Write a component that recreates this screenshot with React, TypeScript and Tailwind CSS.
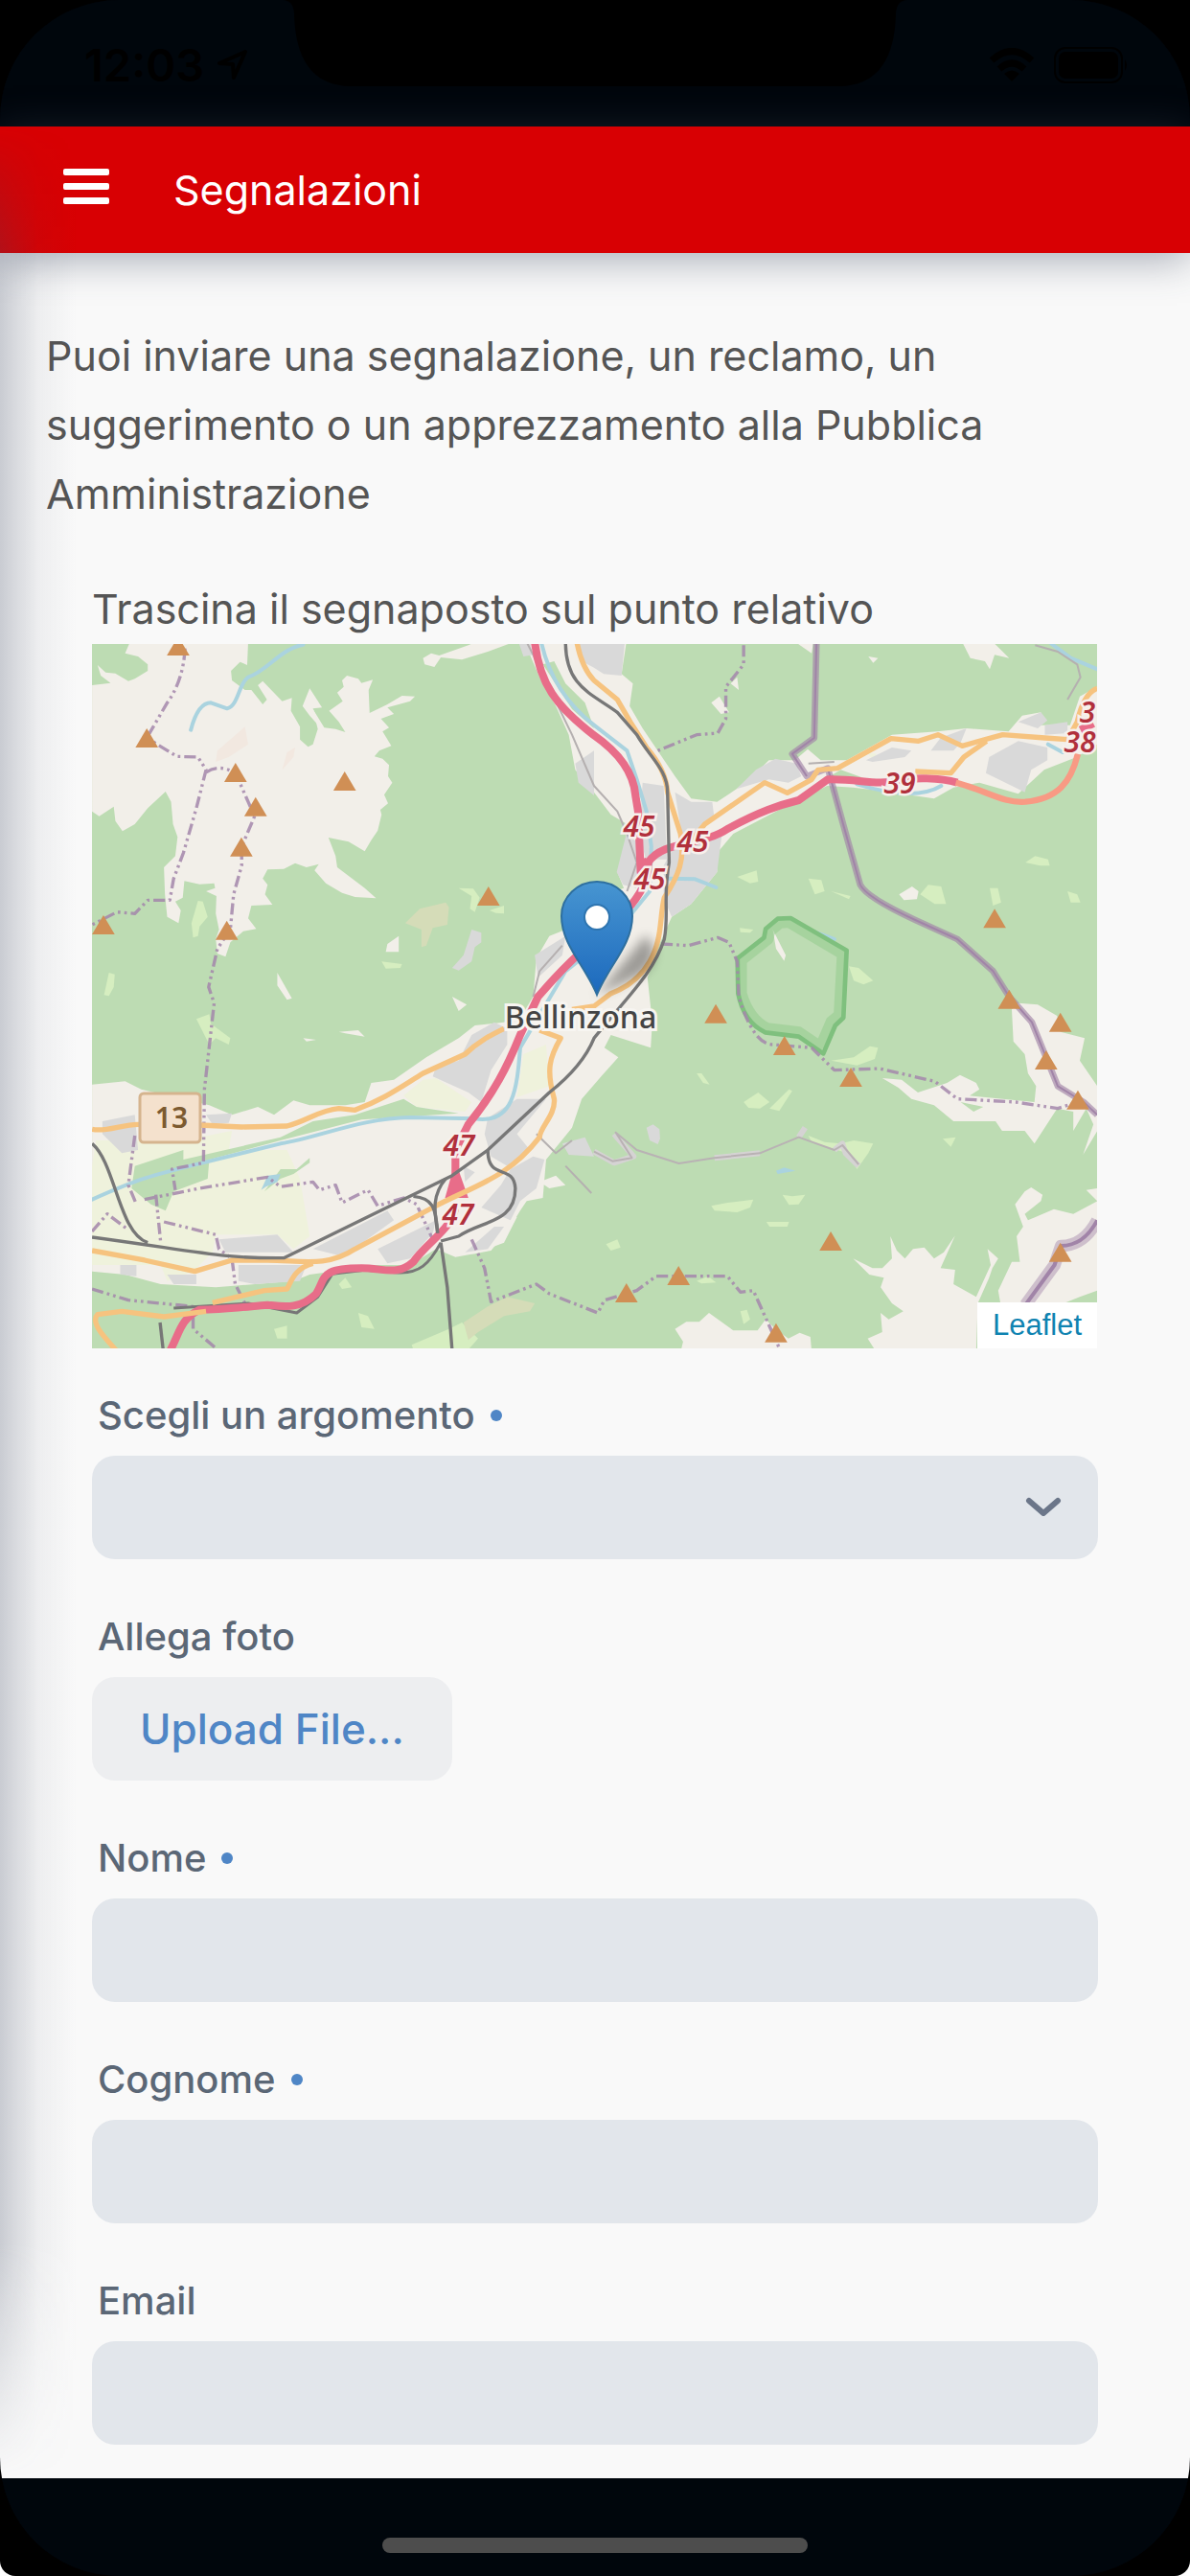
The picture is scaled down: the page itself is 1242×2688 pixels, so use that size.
import { ReactNode } from 'react'

const grass = '#bddcb3'
const rock = '#f2efe9'
const built = '#d9d9d9'
const farm = '#eff2dc'
const meadow = '#d6eec0'
const water = '#aad3df'

// base-line centre of every summit symbol
const peaks = [
  [284, 42], [187, 330], [461, 438], [523, 545], [798, 465], [479, 671],
  [53, 915], [434, 932], [1242, 825], [2805, 895], [1944, 1193], [2156, 1293],
  [2361, 1392], [2850, 1148], [3008, 1220], [2964, 1338], [3062, 1463],
  [2299, 1905], [1829, 2013], [1668, 2067], [2130, 2192], [3008, 1940],
]

const meadows = [
  '330,925 325,880 345,810 360,812 375,860 350,890 345,920',
  '55,1105 70,1035 88,1040 85,1080 70,1108',
  '1150,770 1195,772 1215,800 1200,845 1185,835 1190,795',
  '1245,840 1290,825 1290,850 1265,848',
  '912,1000 975,1008 970,1020 925,1022',
  '340,1180 380,1165 385,1195 445,1240 440,1260 400,1240 380,1260',
  '2010,735 2070,715 2075,750 2050,755',
  '2230,740 2270,745 2280,780 2250,790',
  '2300,780 2360,795 2355,805',
  '2575,790 2600,760 2640,765 2655,820 2620,820',
  '2355,1015 2385,1020 2430,1060 2400,1072 2370,1060',
  '2900,690 2930,670 2970,680 2975,700 2945,700',
  '2790,770 2815,770 2825,815 2800,825',
  '3030,780 3060,790 3070,815 3040,815',
  '2018,895 2060,900 2050,910 2020,908',
  '2300,1310 2370,1300 2420,1265 2445,1270 2435,1305 2380,1325',
  '2030,1440 2075,1410 2110,1440 2080,1460 2045,1458',
  '2110,1460 2170,1400 2180,1405 2140,1468',
  '1885,1350 1900,1350 1925,1385 1905,1380',
  '2230,1545 2280,1565 2330,1570 2370,1560 2430,1570 2415,1600 2380,1650 2350,1600 2240,1565',
  '1930,1765 1980,1755 2060,1745 2050,1770 2010,1785 1940,1780',
  '2150,1730 2180,1735 2220,1730 2200,1760 2170,1762',
  '2100,1815 2170,1815 2165,1830 2110,1830',
  '1605,1885 1640,1870 1650,1895 1620,1905',
  '2645,1555 2685,1550 2670,1580',
  '1885,2000 1920,1985 1945,2005 1900,2008',
  '2020,2095 2040,2090 2050,2120 2030,2135',
  '1005,2200 1120,2150 1160,2130 1210,2180 1180,2215 1010,2215',
  '840,2100 870,2110 890,2150 850,2145',
  '780,2010 800,1990 820,2020 790,2025',
  '580,2150 620,2140 620,2180 590,2180',
]

const motorways = [
  'M1385 0C1400 130 1450 200 1568 292C1650 350 1690 410 1696 480L1704 530L1712 720L1735 680',
  'M1735 690Q1740 760 1668 840L1540 960C1480 1010 1430 1070 1395 1110L1340 1230C1300 1330 1260 1410 1180 1510L1140 1590V1660L1142 1740',
  'M1735 690C1780 620 1900 640 1980 585C2080 530 2140 510 2200 495L2290 430C2380 428 2420 445 2480 438C2560 420 2640 425 2690 440',
  'M1140 1760C1140 1830 1050 1880 1010 1940C960 1985 920 1960 850 1960C720 1960 740 1990 710 2040C660 2090 610 2080 560 2075C500 2080 420 2090 350 2090C290 2120 290 2160 258 2220',
  'M3070 275L3110 255',
]

const orangeRoads = [
  'M1515 0Q1530 80 1568 120L1640 180L1680 250L1730 330Q1790 400 1795 470L1835 600C1850 680 1830 730 1785 800C1770 860 1780 930 1740 1000Q1700 1070 1620 1100L1568 1140L1500 1150',
  'M1840 655L1910 570L2095 440L2165 472L2240 430L2260 400L2320 395L2485 302L2570 310L2630 290L2705 325L2830 290L2960 300L3030 305L3060 250Q3080 160 3122 145',
  'M2560 405L2670 410L2710 360L2780 310',
  'M18 1525C60 1535 110 1510 160 1510L350 1512L480 1518L620 1515C680 1500 720 1465 780 1460L830 1465C920 1430 960 1400 1040 1350L1170 1290C1210 1250 1250 1230 1290 1210',
  'M1400 1215L1465 1240C1430 1300 1420 1340 1445 1430C1450 1480 1400 1520 1400 1550C1300 1680 1200 1700 1070 1770L830 1900C740 1960 660 1935 560 1935L450 1935L335 1970L180 1935L18 1905',
  'M700 1945C640 1960 630 2010 620 2025L550 2030L390 2068',
  'M370 2095L240 2112L110 2095L35 2105C10 2130 60 2180 95 2220',
]

const railways = [
  'M1480 0C1480 140 1560 160 1640 220L1700 290C1740 360 1795 400 1795 470L1800 690C1780 800 1800 850 1785 930C1750 1040 1670 1110 1568 1240C1540 1310 1480 1370 1430 1410L1240 1590L1130 1670L610 1928C420 1930 360 1910 18 1863',
  'M18 1570C90 1630 100 1850 190 1880',
  'M1240 1590C1240 1690 1320 1630 1325 1710C1325 1820 1220 1810 1150 1860L1095 1875',
  'M1110 1680C1060 1740 1080 1800 1085 1850',
  'M1010 1735C1070 1740 1080 1770 1085 1850',
  'M1095 1880L1115 2020L1130 2220',
  'M228 2130L238 2220',
]

const boundaries = [
  'M305 20Q300 120 250 190L187 300L280 358L345 360L370 400L340 520L300 660L270 740L258 808L190 808L150 850L95 845L18 885',
  'M370 408Q410 380 461 410L500 500L520 545L480 640L480 700L455 790L445 900L405 960L378 1080L395 1130L365 1400L362 1630L265 1650L275 1715',
  'M2030 10L2030 70L1975 140L1975 240L1950 285L1885 290L1765 340',
  'M1775 945L1860 950L1950 925L1985 940L2010 1000L2015 1110Q2060 1260 2120 1260L2240 1270L2310 1340L2450 1335L2620 1375L2690 1430L2870 1440L3000 1460L3060 1440',
  'M180 1745L350 1710L560 1675L600 1705L700 1690L720 1715L770 1700L790 1755L870 1715L900 1765L980 1740L1020 1760L1070 1870',
  'M150 1545L130 1700L155 1760M215 1730L230 1880M240 1815L400 1855L410 1900L450 1930L460 2010L490 2070M18 1845L65 1790L130 1840',
  'M18 2025L130 2060L330 2080L330 2150L400 2210',
  'M1190 1870L1230 1960L1250 2065L1390 2010L1430 2040L1580 2100L1600 2060L1700 2030L1760 1985L1980 1985L2020 2035L2060 2030L2100 2120L2140 2210',
]

const shields = [
  ['45', 571, 201], ['45', 627, 217], ['45', 582, 256], ['39', 843, 156],
  ['38', 1031, 113], ['3', 1039, 82], ['47', 383, 534], ['47', 382, 606],
] as const

function MapDrawing() {
  return (
    <svg
      viewBox="0 0 1049 735"
      preserveAspectRatio="xMidYMid slice"
      className="block h-[735px] w-full"
      role="img"
      aria-label="Mappa di Bellinzona"
    >
      <defs>
        <linearGradient id="pin" x1="0" y1="0" x2="0" y2="1">
          <stop offset="0" stopColor="#4795d1" />
          <stop offset="1" stopColor="#1c69bd" />
        </linearGradient>
        <filter id="soft" x="-50%" y="-50%" width="200%" height="200%">
          <feGaussianBlur stdDeviation="6" />
        </filter>
      </defs>
      <rect width="1049" height="735" fill={grass} />
      <g transform="translate(-6 -2) scale(.338 .33333)" fill="none" strokeLinejoin="round">
        {/* rock and open ground */}
        <g fill={rock}>
          <path d="M135 0L120 35 160 45 190 70 190 90 150 115 130 122 90 98 60 95 35 72 45 105 75 128 18 135 18 530 40 545 85 515 90 560 112 592 150 570 190 520 245 468 262 500 268 570 282 610 275 670 240 705 243 790 250 860 285 880 292 840 275 812 298 800 303 748 350 758 395 755 398 770 370 780 402 795 400 850 410 900 400 930 405 975 430 985 445 940 485 905 525 898 500 865 510 825 575 822 552 790 560 760 545 740 560 712 610 710 645 692 680 705 718 695 705 715 740 755 790 785 830 798 895 802 860 770 775 705 770 670 748 612 810 625 860 655 880 620 900 590 912 540 908 525 932 505 920 478 945 440 932 420 935 385 915 365 890 358 905 340 942 325 915 280 935 268 910 240 950 225 930 205 1000 185 1015 170 975 168 930 195 875 222 872 150 885 118 850 128 840 115 805 105 790 120 795 140 775 158 792 185 750 215 780 250 800 282 770 272 735 268 700 210 715 272 700 320 685 328 660 305 660 265 632 215 635 175 605 185 545 122 530 135 558 180 545 195 510 150 490 150 450 120 447 90 475 62 497 72 500 0Z" />
          <path d="M690 145L728 205 700 208 725 270 690 230 668 200Z" />
          <path d="M1040 50L1065 35 1090 42 1180 10 1200 0 1320 0 1240 30 1160 55 1095 48 1075 78 1045 70Z" />
          <path d="M1335 0L1370 40 1400 110 1450 200 1490 290 1510 400 1568 470 1620 540 1670 570 1665 640 1640 720 1660 770 1568 800 1480 900 1430 920 1390 990 1380 1110 1350 1160 1290 1190 1200 1200 1150 1240 1050 1300 950 1370 880 1380 860 1440 800 1450 690 1450 640 1435 580 1480 530 1455 450 1480 380 1450 170 1400 120 1375 18 1385 18 1970 120 1980 230 2010 400 2020 640 2000 690 1980 760 1970 900 1950 1000 1950 1080 1900 1140 1925 1250 1905 1310 1830 1340 1780 1360 1750 1410 1740 1420 1620 1500 1520 1530 1430 1590 1360 1643 1300 1600 1270 1620 1230 1743 1270 1748 1190 1733 1050 1768 950 1808 860 1868 820 1948 720 1948 660 1998 600 2168 510 2288 450 2368 455 2450 465 2618 490 2678 455 2758 440 2878 475 2958 400 3058 360 3122 320 3122 140 3068 170 3038 260 2940 260 2948 220 2890 230 2848 280 2718 270 2628 280 2488 290 2348 370 2268 370 2228 335 2188 370 2108 370 2068 410 2008 460 1948 500 1868 490 1818 420 1778 360 1718 270 1678 200 1688 130 1653 100 1668 0Z" />
          <path d="M2190 0L2240 35 2245 0ZM2705 0L2730 50 2775 60 2790 85 2805 40 2850 50 2800 0Z" />
          <path d="M1955 170L1985 220 1960 225 1930 190ZM2415 45L2445 50 2430 65ZM1990 130L2010 110 2015 150Z" />
          <path d="M2510 790L2550 765 2570 780 2565 805 2525 808ZM2120 900L2160 980 2155 998 2130 960Z" />
          <path d="M590 1035L635 1115 620 1120 590 1075ZM670 1240L710 1245 680 1250ZM780 1220L840 1215 860 1235 800 1225ZM1130 1110L1175 1135 1150 1155ZM930 945L965 920 965 970 925 970Z" />
          <path d="M2858 1150L2878 1130 2938 1135 2998 1170 3008 1220 3083 1240 3068 1310 3122 1390 3122 1530 3078 1605 3110 1510 3088 1460 3048 1530 3048 1470 2998 1460 2928 1570 2898 1530 2828 1530 2808 1500 2678 1500 2618 1450 2548 1430 2508 1395 2458 1365 2518 1370 2568 1410 2658 1380 2698 1355 2748 1380 2758 1400 2728 1420 2928 1440 2933 1390 2908 1350 2898 1290 2863 1250Z" />
          <path d="M1818 2150L1853 2128 1893 2128 1923 2100 1998 2155 2073 2155 2098 2120 2128 2150 2168 2180 2203 2162 2236 2175 2240 2220 1836 2220 1843 2190Z" />
          <path d="M2368 1930L2428 1960 2458 1960 2488 1930 2483 1860 2503 1905 2528 1930 2553 1900 2588 1895 2618 1930 2648 1910 2683 1858 2638 1960 2683 1965 2678 2010 2748 2050 2793 1950 2783 1900 2816 1930 2798 1960 2788 1990 2753 2070 2748 2220 2438 2220 2413 2180 2458 2160 2453 2100 2478 2120 2523 2095 2488 2070 2453 2020 2463 1990 2418 1980Z" />
          <path d="M2868 1760L2898 1720 2918 1707 2953 1730 2948 1750 2898 1790 2908 1810 2988 1775 3048 1790 3122 1750 3088 1715 3122 1710 3122 2030 3068 2050 3018 2070 2823 2070 2816 2030 2858 1940 2883 1940 2873 1860 2893 1830Z" />
          <path d="M1120 1880L1200 1830 1250 1835 1310 1790 1330 1800 1290 1880 1200 1915 1130 1915ZM1400 1690L1450 1670 1480 1700 1430 1710Z" />
        </g>
        {/* fields */}
        <g fill={farm}>
          <path d="M980 1420L1040 1370 1080 1365 1190 1440 1170 1470 1020 1455Z" />
          <path d="M18 1640L30 1560 160 1560 300 1560 450 1530 440 1590 620 1590 660 1680 690 1860 640 1900 590 1855 400 1855 390 1910 330 1970 250 2000 230 1950 18 1950Z" />
          <path d="M1350 1290L1420 1260 1430 1390 1330 1425ZM2410 345L2440 350 2430 370Z" />
        </g>
        {/* riverside woods */}
        <g fill={grass}>
          <path d="M150 1640L300 1590 300 1620 600 1550 700 1500 830 1480 980 1430 1020 1455 1150 1475 1000 1485 850 1495 600 1560 380 1620 375 1680 270 1720 245 1780 200 1760 140 1710Z" />
          <path d="M550 1720L600 1650 650 1650 690 1615 690 1630 640 1665 600 1680Z" />
          <path d="M2280 430L2330 400 2400 425 2340 425ZM1410 70L1445 60 1480 130 1540 190 1568 270 1500 210Z" />
          <path d="M2700 1440L2770 1455 2740 1470Z" />
        </g>
        {/* towns */}
        <g fill={built}>
          <path d="M1568 0L1663 0 1653 105 1598 100 1568 80 1530 60 1520 0ZM1335 0L1370 0 1380 40 1350 45Z" />
          <path d="M1818 470L1868 500 1933 500 1938 540 1898 600 1963 600 1948 720 1868 820 1808 860 1783 800 1783 700 1838 600Z" />
          <path d="M1718 440L1783 450 1793 680 1728 680 1708 600ZM1638 720L1668 600 1718 640 1698 770 1658 760Z" />
          <path d="M2008 460L2068 400 2128 365 2193 380 2208 420 2168 440 2108 430ZM2788 360L2878 310 2968 330 2968 370 2918 400 2898 470 2858 450 2778 410Z" />
          <path d="M2878 250L2948 220 2968 245 2938 270ZM2408 370L2488 330 2548 340 2528 360 2428 375ZM2608 340L2638 300 2718 270 2700 315 2678 340ZM2960 260L3030 250 3030 285 2960 290Z" />
          <path d="M1510 380L1568 340 1568 480 1520 440ZM1385 980L1480 920 1470 980 1395 1050Z" />
          <path d="M1190 1230L1260 1190 1300 1210 1300 1260 1250 1340 1220 1440 1180 1410 1070 1360 1080 1330 1150 1310ZM1240 1490L1330 1430 1420 1430 1330 1540 1370 1590 1300 1640 1250 1610 1230 1540Z" />
          <path d="M1310 1650L1380 1610 1415 1620 1390 1710 1340 1750 1310 1810 1220 1770 1280 1700ZM410 1870L590 1855 640 1910 430 1910ZM700 1900L930 1780 950 1810 840 1890 780 1920Z" />
          <path d="M900 1900L1080 1810 1070 1850 1000 1930 930 1945ZM470 1950L680 1950 660 2000 520 2010 470 2000ZM50 1500L150 1480 160 1590 110 1600 50 1540Z" />
          <path d="M1470 1570L1540 1550 1568 1610 1490 1605ZM1730 1520L1750 1510 1770 1525 1772 1555 1765 1572 1740 1560ZM250 1980L340 1980 340 2010 270 2010ZM370 1480L450 1475 440 1505 390 1510ZM105 1950L155 1950 155 1985 105 1980Z" />
          <path d="M1130 1020L1165 980 1190 900 1220 910 1220 940 1200 955 1190 1000 1150 1028ZM1170 1910L1260 1830 1290 1830 1240 1900ZM1165 1640L1200 1660 1170 1690Z" />
        </g>
        <g fill={meadow}>
          {meadows.map((points) => (
            <polygon key={points} points={points} />
          ))}
        </g>
        <path fill="#d5dcb8" d="M985 880L1030 835 1110 815 1120 830 1115 885 1070 895 1050 950 1035 955 1035 900ZM1165 2130L1240 2080 1300 2050 1385 2070 1370 2095 1290 2110 1210 2160 1180 2185Z" />
        <path fill="#f2e8e0" d="M400 375L405 340 490 265 500 320 440 360ZM605 400L620 345 645 330 640 360Z" />

        {/* streams and the Ticino river */}
        <g stroke={water} strokeWidth="12" strokeLinecap="round">
          <path d="M323 275Q345 190 385 190L435 208C470 200 470 130 500 110C560 90 600 20 670 8" />
          <path d="M1405 0Q1440 160 1568 260L1670 340L1700 430L1730 530L1745 640L1740 780L1660 880L1568 960L1480 1030L1340 1270C1330 1400 1320 1510 1200 1492L1000 1488C850 1490 720 1550 600 1570L360 1630C200 1670 160 1680 18 1745" />
          <path d="M1800 740L1880 742L1945 768M2380 445Q2560 500 2640 450M2970 320L3015 345M2980 5L3040 50L3122 85M2250 908L2310 930" />
        </g>
        <path fill={water} d="M2130 1655L2155 1645 2190 1655 2135 1665ZM540 1715L560 1670 600 1665 590 1690 555 1705Z" />

        {/* protected area */}
        <g strokeLinejoin="round">
          <path d="M2026 1100L2026 998 2108 932 2113 908 2144 882 2168 880 2332 978 2322 1166 2298 1186 2266 1262 2202 1218 2104 1206Q2050 1180 2026 1100Z" stroke="#8fc98a" strokeWidth="28" opacity=".5" />
          <path d="M2013 1100L2011 990 2093 925 2098 898 2135 866 2175 864 2348 965 2338 1176 2313 1200 2276 1288 2200 1235 2097 1222Q2030 1190 2013 1100Z" stroke="#7fc07e" strokeWidth="14" />
        </g>

        {/* side streets */}
        <g stroke="#b5b0b0" strokeWidth="6">
          <path d="M1360 0L1380 40L1500 290L1568 450L1640 530L1670 600L1700 690L1670 780M1380 1110L1400 1030L1470 950M1480 1640L1560 1725" />
          <path d="M2930 10L3000 30L3060 70L3070 110L3030 180M1390 1540L1450 1600L1500 1560M2230 380L2310 375" />
        </g>
        <g stroke="#d5d3d3" strokeWidth="18">
          <path d="M1568 1595L1630 1630L1690 1610L1630 1540M1940 1615L2080 1600M2200 1550L2220 1520M2310 1590L2335 1570L2345 1600L2385 1640" />
        </g>
        <path d="M1568 1595L1625 1625L1685 1615L1635 1535L1700 1590L1830 1632L1940 1615L2080 1600L2200 1550L2310 1590L2335 1575L2385 1635" stroke="#b9b2b4" strokeWidth="6" />

        {/* national border */}
        <g stroke="#a184a8">
          <path d="M2255 0L2248 300L2180 350L2225 420L2290 395L2340 580L2390 760Q2410 800 2560 870L2690 930L2800 1030L2850 1110L2920 1190L2960 1290L3000 1390L3080 1440L3122 1480" strokeWidth="20" opacity=".65" />
          <path d="M2255 0L2248 300L2180 350L2225 420M2290 395L2340 580L2390 760Q2410 800 2560 870L2690 930L2800 1030L2850 1110L2920 1190L2960 1290L3000 1390L3080 1440L3122 1480" strokeWidth="6" />
          <path d="M2900 2075L2990 1950L3010 1890Q3080 1890 3122 1810" strokeWidth="38" opacity=".45" />
          <path d="M2900 2075L2990 1950L3010 1890Q3080 1890 3122 1810" strokeWidth="12" />
        </g>
        <g stroke="#a487ab" strokeWidth="10" strokeDasharray="36 12 8 12 8 12" opacity=".85">
          {boundaries.map((d) => (
            <path key={d} d={d} />
          ))}
        </g>

        {/* the southern line runs beneath the motorway */}
        <path d="M1095 1880C1060 1945 1030 1980 955 1973L860 1966L760 1978L715 2050L650 2100L500 2070L270 2085" stroke="#777777" strokeWidth="9" />
        <g stroke="#e86d89" strokeWidth="24">
          {motorways.map((d) => (
            <path key={d} d={d} />
          ))}
        </g>
        <path d="M2685 440C2780 465 2830 505 2900 500C3000 490 3040 440 3062 350" stroke="#f89a84" strokeWidth="19" />
        <path fill="#e86d89" d="M1130 1660H1152L1180 1740H1108Z" />
        <g stroke="#f6c37f" strokeWidth="16">
          {orangeRoads.map((d) => (
            <path key={d} d={d} />
          ))}
        </g>
        <g stroke="#777777" strokeWidth="10">
          {railways.map((d) => (
            <path key={d} d={d} />
          ))}
        </g>
        <g fill="#d08f55">
          {peaks.map(([x, y]) => (
            <path key={`${x}-${y}`} d={`M${x} ${y - 60}L${x + 35} ${y}H${x - 35}Z`} />
          ))}
        </g>
      </g>

      <g
        fill="#b1303c"
        stroke="#f7f0ec"
        strokeWidth="5"
        paintOrder="stroke"
        textAnchor="middle"
        className="text-[30px] font-semibold italic"
        fontFamily="'Noto Sans', sans-serif"
      >
        {shields.map(([label, x, y]) => (
          <text key={`${x}-${y}`} x={x} y={y}>
            {label}
          </text>
        ))}
      </g>
      <rect x="50" y="469" width="63" height="51" rx="4" fill="#f4e1cd" stroke="#d5b48e" strokeWidth="3" />
      <text x="83" y="505" textAnchor="middle" fill="#7c5a30" className="text-[30px] font-semibold" fontFamily="'Noto Sans', sans-serif">
        13
      </text>
      <text
        x="510"
        y="401"
        textAnchor="middle"
        fill="#444444"
        stroke="#f7f5f1"
        strokeWidth="6"
        paintOrder="stroke"
        className="text-[32px] font-medium"
        fontFamily="'Noto Sans', sans-serif"
      >
        Bellinzona
      </text>

      {/* marker */}
      <path d="M526 367L578 304Q598 326 572 346Z" fill="#000000" opacity=".35" filter="url(#soft)" />
      <path
        d="M527 366C515 336 490 314 490 284A37 36 0 0 1 564 284C564 314 539 336 527 366Z"
        fill="url(#pin)"
        stroke="#2e6f9f"
        strokeWidth="2"
      />
      <circle cx="527" cy="285" r="13" fill="#ffffff" stroke="#2e75b0" strokeWidth="2" />
    </svg>
  )
}

function StatusBar() {
  return (
    <div className="relative flex h-[132px] items-start justify-between bg-[#00060c] pr-16 pl-[72px] pt-[34px] text-black">
      <div className="flex items-center gap-3 pl-4">
        <span className="text-[47px] leading-[68px] font-semibold">12:03</span>
        <svg width="34" height="34" viewBox="0 0 34 34" fill="none" stroke="currentColor" strokeWidth="4" strokeLinejoin="round">
          <path d="M31 3L4 15L18 16L19 30Z" />
        </svg>
      </div>
      <svg className="absolute top-0 left-1/2 -translate-x-1/2" width="652" height="90" viewBox="0 0 652 90">
        <path d="M0 0Q11 0 12 14C13 60 30 90 72 90H580C622 90 639 60 640 14Q641 0 652 0Z" fill="#000000" />
      </svg>
      <div className="flex h-[68px] items-center gap-5">
        <svg width="48" height="36" viewBox="0 0 48 36" fill="none" stroke="currentColor" strokeWidth="7">
          <path d="M3 13Q24 -6 45 13M11 22Q24 10 37 22" />
          <path d="M24 35L16 27Q24 20 32 27Z" fill="currentColor" stroke="none" />
        </svg>
        <svg width="78" height="38" viewBox="0 0 78 38" fill="none">
          <rect x="1" y="1" width="70" height="36" rx="11" stroke="currentColor" strokeWidth="2" />
          <rect x="5" y="5" width="62" height="28" rx="7" fill="currentColor" />
          <path d="M74 13Q78 19 74 25Z" fill="currentColor" />
        </svg>
      </div>
    </div>
  )
}

interface FieldProps {
  id: string
  label: string
  required?: boolean
  children: ReactNode
}

function Field({ id, label, required, children }: FieldProps) {
  return (
    <div className="flex flex-col items-start gap-3">
      <label htmlFor={id} className="flex items-center gap-4 pl-[6px] text-[40px] leading-[60px] font-medium text-[#5b6776]">
        {label}
        {required && <span className="size-3 rounded-full bg-[#4f86c6]" />}
      </label>
      {children}
    </div>
  )
}

const inputClass = 'h-[108px] w-full rounded-3xl bg-[#e2e6eb] px-8 text-[40px] text-[#5b6776] outline-none'

export default function App() {
  return (
    <div className="min-h-screen rounded-b-2xl bg-black font-['Inter','Liberation_Sans',sans-serif]">
      <div className="relative flex min-h-screen flex-col overflow-hidden rounded-[124px] bg-[#00060c]">
        <StatusBar />
        <header className="relative z-10 flex h-[132px] items-center bg-[#d80003] pl-[66px] text-white shadow-[0_6px_40px_rgba(60,70,95,0.45)]">
          <button type="button" aria-label="Apri menu" className="flex w-12 flex-col gap-2 pb-2">
            <span className="h-[7px] rounded-xs bg-white" />
            <span className="h-[7px] rounded-xs bg-white" />
            <span className="h-[7px] rounded-xs bg-white" />
          </button>
          <h1 className="pl-[67px] text-[43px] leading-[60px]">Segnalazioni</h1>
        </header>

        <main className="grow bg-[#f9f9f9] px-12 pt-[71px] pb-[35px] text-[#555555]">
          <p className="text-[43px] leading-[72px]">
            Puoi inviare una segnalazione, un reclamo, un suggerimento o un apprezzamento alla Pubblica Amministrazione
          </p>
          <form className="px-12 pt-12">
            <section className="mr-px pb-10">
              <h2 className="text-[43px] leading-[72px]">Trascina il segnaposto sul punto relativo</h2>
              <div className="relative mt-px">
                <MapDrawing />
                <a
                  href="#leaflet"
                  className="absolute right-0 bottom-0 bg-white px-4 font-['Liberation_Sans',sans-serif] text-[31px] leading-[48px] text-[#0f83b1]"
                >
                  Leaflet
                </a>
              </div>
            </section>
            <div className="flex flex-col gap-[51px]">
              <Field id="argomento" label="Scegli un argomento" required>
                <div className="relative w-full">
                  <select id="argomento" className={`${inputClass} appearance-none`}>
                    <option value=""></option>
                  </select>
                  <svg
                    className="pointer-events-none absolute top-[43px] right-[38px]"
                    width="38"
                    height="22"
                    viewBox="0 0 38 22"
                    fill="none"
                    stroke="#6b7689"
                    strokeWidth="6"
                    strokeLinecap="round"
                    strokeLinejoin="round"
                  >
                    <path d="M4 4L19 17L34 4" />
                  </svg>
                </div>
              </Field>
              <Field id="foto" label="Allega foto">
                <button id="foto" type="button" className="h-[108px] rounded-3xl bg-[#edeef0] px-[50px] text-[44px] font-medium text-[#4f86c6]">
                  Upload File...
                </button>
              </Field>
              <Field id="nome" label="Nome" required>
                <input id="nome" type="text" className={inputClass} />
              </Field>
              <Field id="cognome" label="Cognome" required>
                <input id="cognome" type="text" className={inputClass} />
              </Field>
              <Field id="email" label="Email">
                <input id="email" type="email" className={inputClass} />
              </Field>
            </div>
          </form>
        </main>

        {/* shadow of the closed side drawer */}
        <div className="pointer-events-none absolute top-[132px] bottom-[102px] left-0 z-20 w-20 bg-linear-to-r from-[#3c465f]/25 via-[#3c465f]/6 to-transparent [mask-image:linear-gradient(to_bottom,transparent,black_140px,black_90%,transparent)]" />

        <footer className="relative z-20 flex h-[102px] items-end justify-center bg-[#00060c] pb-6">
          <div className="h-4 w-[444px] rounded-full bg-[#4d4d4d]" />
        </footer>
      </div>
    </div>
  )
}
